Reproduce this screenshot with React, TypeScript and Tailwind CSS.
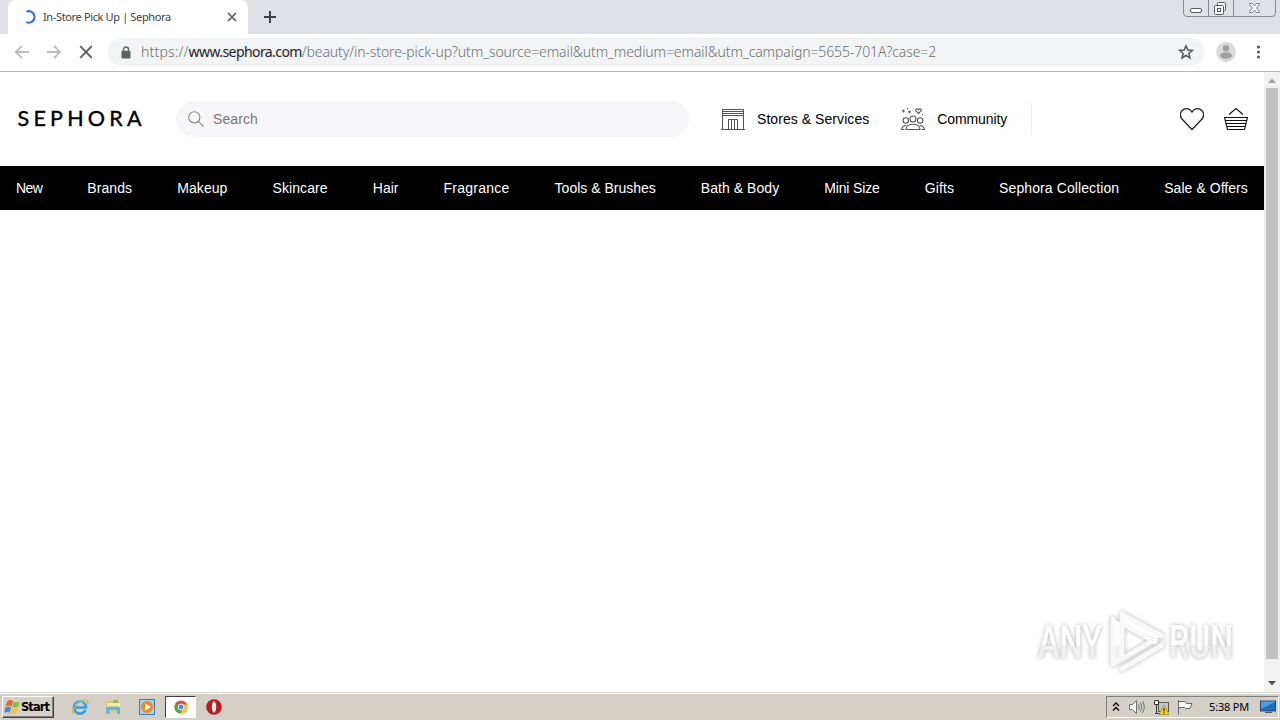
import React from "react";

const navItems = [
  { label: "New", className: "tracking-[-0.6px]" },
  { label: "Brands", className: "tracking-[0.1px]" },
  { label: "Makeup", className: "tracking-[0.05px]" },
  { label: "Skincare", className: "tracking-[0.1px]" },
  { label: "Hair", className: "tracking-[0px]" },
  { label: "Fragrance", className: "tracking-[0.25px]" },
  { label: "Tools & Brushes", className: "tracking-[0px]" },
  { label: "Bath & Body", className: "tracking-[0.05px]" },
  { label: "Mini Size", className: "tracking-[-0.15px]" },
  { label: "Gifts", className: "tracking-[0.1px]" },
  { label: "Sephora Collection", className: "tracking-[0.1px]" },
  { label: "Sale & Offers", className: "tracking-[0.05px]" },
];

const TabBar = () => {
  return (
    <div className="relative flex h-[34px] bg-[#dee1e6]">
      <div className="ml-2 flex h-full w-[240px] items-center rounded-t-lg bg-white pl-[15px] pr-[11px]">
        <svg className="h-[14px] w-[14px] shrink-0" viewBox="0 0 14 14" fill="none">
          <path d="M3.5 1.6 A5.8 5.8 0 1 1 3.2 12.2" stroke="#2f72e4" strokeWidth="2" />
        </svg>
        <span className="ml-[6px] whitespace-nowrap font-['Noto_Sans',sans-serif] text-[11px] tracking-[-0.36px] text-[#3c4043]">
          In-Store Pick Up | Sephora
        </span>
        <svg className="ml-auto h-[10px] w-[10px]" viewBox="0 0 10 10">
          <path d="M1 1 L9 9 M9 1 L1 9" stroke="#55585d" strokeWidth="1.7" />
        </svg>
      </div>
      <svg className="ml-[15px] mt-[10px] h-[14px] w-[14px]" viewBox="0 0 14 14">
        <path d="M7 1 V13 M1 7 H13" stroke="#3c4043" strokeWidth="2" />
      </svg>

      {/* Window buttons */}
      <svg className="absolute right-[3px] top-0 h-[18px] w-[95px]" viewBox="0 0 95 18" fill="none">
        <path d="M1.5 0 V13 Q1.5 16.5 5 16.5 H90 Q93.5 16.5 93.5 13 V0 M26.5 0 V16 M51.5 0 V16" stroke="#878b91" />
        <rect x="8.500" y="8.500" width="11" height="4" rx="1.500" fill="#fff" stroke="#565a61" />
        <rect x="35.500" y="2.500" width="8" height="8" rx="1" fill="#f5f6f8" stroke="#565a61" />
        <rect x="32.500" y="5.500" width="9" height="9" rx="1" fill="#fff" stroke="#565a61" />
        <rect x="35.500" y="8.500" width="3" height="3" stroke="#565a61" />
        <path
          d="M67.500 3.500 H70.500 L72.500 6 L74.500 3.500 H77.500 V4.500 L74.500 8 L77.500 11.500 V12.500 H74.500 L72.500 10 L70.500 12.500 H67.500 V11.500 L70.500 8 L67.500 4.500 Z"
          fill="#fff"
          stroke="#6c7077"
          strokeWidth="0.9"
        />
      </svg>
    </div>
  );
};

const AddressBar = () => {
  return (
    <div className="flex h-[38px] items-center border-b border-[#b5b7b9] bg-white pb-px pl-[14px]">
      <svg className="h-4 w-4" viewBox="0 0 16 16" fill="none" stroke="#babcbe" strokeWidth="1.8">
        <path d="M15 8 H2 M8 1.800 L1.800 8 L8 14.200" />
      </svg>
      <svg className="ml-4 h-4 w-4" viewBox="0 0 16 16" fill="none" stroke="#babcbe" strokeWidth="1.8">
        <path d="M1 8 H14 M8 1.800 L14.200 8 L8 14.200" />
      </svg>
      <svg className="ml-4 h-4 w-4" viewBox="0 0 16 16" fill="none" stroke="#5a5d61" strokeWidth="1.9">
        <path d="M2.200 2.200 L13.800 13.800 M13.800 2.200 L2.200 13.800" />
      </svg>
      <div className="ml-[14px] flex h-7 w-[1096px] items-center rounded-full bg-[#f1f3f4] pl-[13px] pr-[10px]">
        <svg className="h-[13px] w-[10px]" viewBox="0 0 10 13" fill="none">
          <path d="M2.500 6 V3.500 a2.500 2.500 0 0 1 5 0 V6" stroke="#5f6368" strokeWidth="1.4" />
          <rect x="0.500" y="4.800" width="9" height="7.700" rx="1" fill="#5f6368" />
        </svg>
        <div className="ml-[10px] whitespace-nowrap pb-0.5 font-['Noto_Sans',sans-serif] text-[14px] font-light tracking-[-0.1px] text-[#6b7075]">
          <span className="tracking-[0.2px]">https://</span>
          <span className="font-normal tracking-[-0.58px] text-[#202124]">www.sephora.com</span>
          /beauty/in-store-pick-up?utm_source=email&amp;utm_medium=email&amp;utm_campaign=5655-701A?case=2
        </div>
        <svg className="ml-auto h-4 w-4" viewBox="0 0 16 16" fill="none">
          <path
            d="M8 1.800 L9.800 6 L14.400 6.400 L10.900 9.400 L12 14 L8 11.500 L4 14 L5.100 9.400 L1.600 6.400 L6.200 6 Z"
            stroke="#55595e"
            strokeWidth="1.500"
          />
        </svg>
      </div>
      <svg className="ml-3 h-5 w-5" viewBox="0 0 20 20">
        <circle cx="10" cy="10" r="10" fill="#dadada" />
        <circle cx="10" cy="6.200" r="3.200" fill="#a0a0a0" />
        <ellipse cx="10" cy="13.500" rx="6" ry="3.200" fill="#a0a0a0" />
      </svg>
      <svg className="ml-5 h-4 w-[6px]" viewBox="0 0 6 16" fill="#5a5d61">
        <circle cx="2.500" cy="3" r="1.600" />
        <circle cx="2.500" cy="8" r="1.600" />
        <circle cx="2.500" cy="13" r="1.600" />
      </svg>
    </div>
  );
};

const StoreIcon = () => (
  <svg className="h-6 w-6" viewBox="0 0 24 24" fill="none" stroke="#555" strokeWidth="1">
    <path d="M1.500 2 V22 M22.500 2 V22 M0 22.500 H24 M1 2.500 H23 M1 4.500 H23 M1 6.500 H23 M1 8.500 H23" />
    <path d="M7.500 22 V12.500 H16.500 V22 M10.500 13 V22 M13.500 13 V22" />
  </svg>
);

const CommunityIcon = () => (
  <svg className="h-6 w-6" viewBox="0 0 24 24" fill="none" stroke="#555" strokeWidth="1.1">
    <path d="M2.500 2.500 V5.500 M1 4 H4 M6.500 1 V2.500 M7.500 4 L9.500 6 M9.500 4 L7.500 6" />
    <path d="M17.500 6.500 L14.800 3.700 C14 2 16.400 0.800 17.500 2.700 C18.600 0.800 21 2 20.200 3.700 Z M21 7.500 H22" />
    <circle cx="4.800" cy="13.500" r="2.700" />
    <circle cx="12" cy="12" r="3" />
    <circle cx="19.200" cy="13.500" r="2.700" />
    <path d="M5 22.500 C5 15.500 19 15.500 19 22.500 Z M5.500 18.500 C2.500 18.500 1 20 0.500 22.500 H3.500 M18.500 18.500 C21.500 18.500 23 20 23.500 22.500 H20.500" />
  </svg>
);

const SiteHeader = () => {
  return (
    <header className="flex h-[94px] items-center pl-4 pr-4 font-['Liberation_Sans',Arial,sans-serif] text-[14px]">
      <svg className="h-10 w-32 overflow-visible" viewBox="0 0 128 40">
        <text
          x="1.500"
          y="27"
          textLength="124"
          lengthAdjust="spacing"
          fontFamily="Lato, sans-serif"
          fontSize="21.500"
          fill="#000"
          stroke="#000"
          strokeWidth="0.400"
        >
          SEPHORA
        </text>
      </svg>
      <div className="ml-8 flex h-9 w-[513px] items-center rounded-full bg-[#f6f6f8] pl-3">
        <svg className="h-4 w-4" viewBox="0 0 16 16" fill="none" stroke="#888" strokeWidth="1.100">
          <circle cx="6.300" cy="6.300" r="5.600" />
          <path d="M10.300 10.300 L15.500 15.500" />
        </svg>
        <span className="ml-[9px] tracking-[0.1px] text-[#757575]">Search</span>
      </div>
      <div className="ml-8 flex items-center">
        <StoreIcon />
        <span className="ml-3 whitespace-nowrap tracking-[0.06px] text-black">Stores &amp; Services</span>
      </div>
      <div className="ml-8 flex items-center">
        <CommunityIcon />
        <span className="ml-3 w-[70px] tracking-[-0.1px] text-black">Community</span>
      </div>
      <div className="ml-6 h-8 w-px bg-[#eeeeee]"></div>
      <svg className="ml-auto h-6 w-6" viewBox="0 0 24 24" fill="none">
        <path
          d="M12 22.500 L2 12 C-0.800 8.600 0.200 3.300 4.500 1.900 C7.700 0.900 10.500 2.500 12 5 C13.500 2.500 16.300 0.900 19.500 1.900 C23.800 3.300 24.800 8.600 22 12 Z"
          stroke="#222"
          strokeWidth="1.300"
        />
      </svg>
      <svg className="ml-5 h-6 w-6" viewBox="0 0 24 24" fill="none" stroke="#111" strokeWidth="1.100">
        <path d="M5 7.500 L12 1.500 L19 7.500" />
        <path d="M0.500 10.500 H23.500 L20.500 22.500 H3.500 Z M1.500 13.500 H22.500 M2.200 16.500 H21.800 M3 19.500 H21" />
      </svg>
    </header>
  );
};

const Watermark = () => (
  <svg className="absolute bottom-4 right-[22px] h-[70px] w-[210px] overflow-visible" viewBox="0 0 210 70" fill="none">
    <defs>
      <linearGradient id="fade" x1="0" y1="0" x2="0" y2="1">
        <stop offset="0.55" stopColor="#ffffff" />
        <stop offset="0.56" stopColor="#f0f0f0" />
        <stop offset="1" stopColor="#f2f2f2" />
      </linearGradient>
    </defs>
    <g
      className="drop-shadow-[0_0_2px_rgba(0,0,0,0.3)]"
      fontFamily="Roboto, sans-serif"
      fontSize="47"
      fontWeight="500"
      fill="url(#fade)"
    >
      <text x="0" y="0" textLength="97" lengthAdjust="spacingAndGlyphs" transform="translate(6 52) scale(0.66 1)">
        ANY
      </text>
      <text x="0" y="0" textLength="97" lengthAdjust="spacingAndGlyphs" transform="translate(137 52) scale(0.66 1)">
        RUN
      </text>
      <path
        d="M90 50 V8 L130 30 M91 18 L123 36 M81 13 V58 L124 33 M90 63 L130 39"
        stroke="#f8f8f8"
        strokeWidth="5"
        strokeLinecap="round"
        strokeLinejoin="round"
      />
    </g>
  </svg>
);

const ScrollBar = () => (
  <div className="flex w-4 shrink-0 flex-col items-center bg-[#f1f1f1]">
    <svg className="h-4 w-4" viewBox="0 0 16 16">
      <path d="M4 11 H12 L8 6.500 Z" fill="#a3a3a3" />
    </svg>
    <div className="h-[571px] w-3 bg-[#c1c1c1]"></div>
    <svg className="mt-auto h-4 w-4" viewBox="0 0 16 16">
      <path d="M4 5 H12 L8 9.500 Z" fill="#505050" />
    </svg>
  </div>
);

const TaskBar = () => {
  return (
    <div className="flex h-7 items-center border-t border-[#d4d0c8] bg-[#d4d0c8] shadow-[inset_0_1px_0_#fff]">
      <div className="ml-[2px] mt-px flex h-[22px] w-[52px] items-center border border-b-[#404040] border-l-white border-r-[#404040] border-t-white pl-px shadow-[inset_-1px_-1px_0_#808080]">
        <svg className="h-[16px] w-[17px] shrink-0" viewBox="0 0 16 15">
          <path d="M3 2 Q6 0 8.500 2 L7 7 Q4.500 5.500 1.500 7 Z" fill="#e7682c" />
          <path d="M9 2.300 Q12 4 15 2 L13.500 7 Q10.500 9 7.800 7.300 Z" fill="#8abb45" />
          <path d="M1.200 8 Q4 6.500 6.700 8 L5.300 13 Q3 11.500 0 13 Z" fill="#4688c9" />
          <path d="M7.400 8.300 Q10.500 10 13.300 8 L12 13 Q9 15 6 13.300 Z" fill="#f5c340" />
        </svg>
        <span className="pt-px font-['DejaVu_Sans',sans-serif] text-[11.5px] font-bold tracking-[-0.95px] text-black">
          Start
        </span>
      </div>

      {/* Internet Explorer */}
      <svg className="ml-[17px] h-[18px] w-[18px]" viewBox="0 0 18 18" fill="none">
        <path d="M14.500 12 A6 6 0 1 1 15 9.500 H4" stroke="#3a9edb" strokeWidth="2.600" />
        <path d="M2 15.500 C-1 12 10 1 15.500 2 C17.500 2.500 17 5 16 6.500" stroke="#d9b344" strokeWidth="1.200" />
        <path d="M4.500 7 A5 5 0 0 1 13 6.500" stroke="#8bd2f3" />
      </svg>
      {/* Explorer */}
      <svg className="ml-[16px] h-[16px] w-[16px]" viewBox="0 0 16 16">
        <path d="M1 2 H6 L7 3 H14 V13 H1 Z" fill="#e5c763" />
        <path d="M2 4 H15 V9 H2 Z" fill="#fae9a0" />
        <path d="M8 1 H13 V4 H8 Z" fill="#8cb95e" />
        <path d="M1 15 V9 Q1 7.500 3 7.500 H13 Q15 7.500 15 9 V15 H12 V11 H4.500 V15 Z" fill="#65b4dc" />
      </svg>
      {/* Media player */}
      <svg className="ml-[18px] h-[16px] w-[16px]" viewBox="0 0 16 16">
        <rect x="0.500" y="0.500" width="15" height="15" fill="#a8cdec" stroke="#427eb5" />
        <circle cx="8" cy="8" r="6" fill="#ef8a21" />
        <path d="M6 4.500 L12 8 L6 11.500 Z" fill="#fff" />
      </svg>
      <div className="ml-[10px] flex h-[22px] w-[31px] items-center justify-center border border-b-white border-l-[#404040] border-r-white border-t-[#404040] bg-white">
        <svg className="h-[14px] w-[14px]" viewBox="0 0 16 16">
          <circle cx="8" cy="8" r="7.500" fill="#e5483c" />
          <path d="M8 8 L1.500 4.250 A7.500 7.500 0 0 0 7 15.430 L10.800 9.600 Z" fill="#47a85b" />
          <path d="M8 5 H14.900 A7.500 7.500 0 0 1 7 15.430 L10.800 9.600 Z" fill="#f6c83a" />
          <circle cx="8" cy="8" r="3.600" fill="#fff" />
          <circle cx="8" cy="8" r="2.800" fill="#4785df" />
        </svg>
      </div>
      {/* Opera */}
      <svg className="ml-[10px] h-[16px] w-[16px]" viewBox="0 0 16 16">
        <circle cx="8" cy="8" r="7.800" fill="#b51d22" />
        <ellipse cx="8" cy="8" rx="2.200" ry="5.800" fill="#f7e9e8" />
      </svg>

      {/* Tray */}
      <div className="ml-auto mr-[1px] mt-px flex h-[22px] w-[173px] items-center border border-b-white border-l-[#808080] border-r-white border-t-[#808080] pl-[5px] pr-[2px]">
        <svg className="h-[10px] w-[8px]" viewBox="0 0 8 10" fill="none" stroke="#000" strokeWidth="1.300">
          <path d="M1 4 L4 1 L7 4 M1 8.500 L4 5.500 L7 8.500" />
        </svg>
        <svg className="ml-[9px] h-[16px] w-[16px]" viewBox="0 0 16 16" fill="none" stroke="#6f6f6f">
          <path d="M0.500 5.500 H3.500 L7.500 1.500 V14.500 L3.500 10.500 H0.500 Z" fill="#fff" />
          <path d="M9.500 5.500 Q11 8 9.500 10.500 M11.500 3.500 Q14 8 11.500 12.500 M13.500 2 Q17 8 13.500 14" />
        </svg>
        <svg className="ml-[8px] h-[16px] w-[16px]" viewBox="0 0 16 16" fill="none">
          <rect x="5.500" y="3.500" width="10" height="9" fill="#c4c4c0" stroke="#555" />
          <path d="M1.500 1.500 H5.500 V5.500 H1.500 Z" fill="#fff" stroke="#333" />
          <path d="M3.500 6 V14 M2 14.500 H7" stroke="#333" />
          <path d="M11 6 L16 15.500 H6 Z" fill="#f8d52f" stroke="#a58200" strokeWidth="0.700" />
          <path d="M11 9 V12.500 M11 13.300 V14.500" stroke="#222" strokeWidth="1.200" />
        </svg>
        <svg className="ml-[8px] h-[16px] w-[16px]" viewBox="0 0 16 16" fill="none">
          <path d="M1.500 1 V15.500 M2 2.500 H8 L9.500 4.500 H15 L13 9.500 H8.500 L7.500 8.500 H2" fill="#fff" stroke="#666" />
        </svg>
        <span className="ml-auto whitespace-nowrap font-['Noto_Sans',sans-serif] text-[11px] tracking-[-0.2px] text-black">
          5:38 PM
        </span>
        <svg className="ml-[11px] h-[14px] w-[16px]" viewBox="0 0 16 14">
          <rect x="0.500" y="1" width="15" height="10" fill="#246bb6" stroke="#204b7c" />
          <path d="M1 9 L15 2 V1.500 H1 Z" fill="#4d9de0" />
          <path d="M5 12 H12 V13 H5 Z" fill="#555" />
        </svg>
      </div>
    </div>
  );
};

const App = () => {
  return (
    <div className="flex h-[720px] w-[1280px] flex-col overflow-hidden bg-white">
      <TabBar />
      <AddressBar />
      <div className="flex h-[620px]">
        <main className="relative w-[1264px]">
          <SiteHeader />
          <nav className="flex h-11 items-center justify-between bg-black px-4 font-['Liberation_Sans',Arial,sans-serif] text-[14px] text-white">
            {navItems.map((item) => (
              <span key={item.label} className={`whitespace-nowrap ${item.className}`}>
                {item.label}
              </span>
            ))}
          </nav>
          <Watermark />
        </main>
        <ScrollBar />
      </div>
      <TaskBar />
    </div>
  );
};

export default App;
